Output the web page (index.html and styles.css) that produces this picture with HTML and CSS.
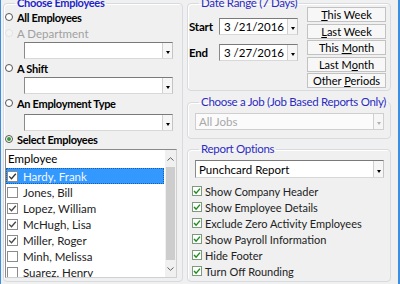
FILE: index.html
```html
<!DOCTYPE html>
<html>
<head>
  <title>Report Settings</title>
  <meta name="viewport" content="width=device-width, initial-scale=1.0">
  <link rel="stylesheet" href="styles.css">
</head>
<body>
  <div class="window">
    <fieldset class="group employees">
      <legend class="strong">Choose Employees</legend>
      <div class="option"><span class="radio"></span>All Employees</div>
      <div class="option disabled"><span class="radio"></span>A Department</div>
      <div class="combo pick"><span class="value"></span><span class="arrow"></span></div>
      <div class="option"><span class="radio"></span>A Shift</div>
      <div class="combo pick"><span class="value"></span><span class="arrow"></span></div>
      <div class="option"><span class="radio"></span>An Employment Type</div>
      <div class="combo pick last"><span class="value"></span><span class="arrow"></span></div>
      <div class="option"><span class="radio on"></span>Select Employees</div>

      <div class="list">
        <div class="list-body">
          <div class="list-head">Employee</div>
          <div class="item selected">
            <span class="box"><svg width="9" height="9" viewBox="0 0 9 9"><path d="M1.2 4.4 L3.5 6.7 L7.8 1.8" fill="none" stroke="currentColor" stroke-width="1.3"/></svg></span>
            <span class="name">Hardy, Frank</span>
          </div>
          <div class="item">
            <span class="box"></span>
            <span class="name">Jones, Bill</span>
          </div>
          <div class="item">
            <span class="box"><svg width="9" height="9" viewBox="0 0 9 9"><path d="M1.2 4.4 L3.5 6.7 L7.8 1.8" fill="none" stroke="currentColor" stroke-width="1.3"/></svg></span>
            <span class="name">Lopez, William</span>
          </div>
          <div class="item">
            <span class="box"><svg width="9" height="9" viewBox="0 0 9 9"><path d="M1.2 4.4 L3.5 6.7 L7.8 1.8" fill="none" stroke="currentColor" stroke-width="1.3"/></svg></span>
            <span class="name">McHugh, Lisa</span>
          </div>
          <div class="item">
            <span class="box"><svg width="9" height="9" viewBox="0 0 9 9"><path d="M1.2 4.4 L3.5 6.7 L7.8 1.8" fill="none" stroke="currentColor" stroke-width="1.3"/></svg></span>
            <span class="name">Miller, Roger</span>
          </div>
          <div class="item">
            <span class="box"></span>
            <span class="name">Minh, Melissa</span>
          </div>
          <div class="item">
            <span class="box"></span>
            <span class="name">Suarez, Henry</span>
          </div>
        </div>
        <div class="scroll">
          <span class="scroll-btn"><svg width="7" height="4" viewBox="0 0 7 4"><path d="M0.5 3.5 L3.5 0.7 L6.5 3.5" fill="none" stroke="#606060" stroke-width="1"/></svg></span>
          <span class="thumb"></span>
          <span class="scroll-btn"><svg width="7" height="4" viewBox="0 0 7 4"><path d="M0.5 0.5 L3.5 3.3 L6.5 0.5" fill="none" stroke="#606060" stroke-width="1"/></svg></span>
        </div>
      </div>
    </fieldset>

    <div class="side">
      <fieldset class="group dates">
        <legend>Date Range (7 Days)</legend>
        <div class="date-fields">
          <div class="date-row">
            <span class="date-label">Start</span>
            <div class="combo date"><span class="value">3 /21/2016</span><span class="arrow"></span></div>
          </div>
          <div class="date-row">
            <span class="date-label">End</span>
            <div class="combo date"><span class="value">3 /27/2016</span><span class="arrow"></span></div>
          </div>
        </div>
        <div class="periods">
          <button class="period"><u>T</u>his Week</button>
          <button class="period"><u>L</u>ast Week</button>
          <button class="period">This <u>M</u>onth</button>
          <button class="period">Last M<u>o</u>nth</button>
          <button class="period">Other <u>P</u>eriods</button>
        </div>
      </fieldset>

      <fieldset class="group job">
        <legend>Choose a Job (Job Based Reports Only)</legend>
        <div class="combo wide disabled"><span class="value">All Jobs</span><span class="arrow"></span></div>
      </fieldset>

      <fieldset class="group report">
        <legend>Report Options</legend>
        <div class="combo wide tall"><span class="value">Punchcard Report</span><span class="arrow"></span></div>
        <div class="check"><span class="tick"><svg width="8" height="8" viewBox="0 0 8 8"><path d="M1 4 L3.1 6.1 L7 1.6" fill="none" stroke="currentColor" stroke-width="1.4"/></svg></span>Show Company Header</div>
        <div class="check"><span class="tick"><svg width="8" height="8" viewBox="0 0 8 8"><path d="M1 4 L3.1 6.1 L7 1.6" fill="none" stroke="currentColor" stroke-width="1.4"/></svg></span>Show Employee Details</div>
        <div class="check"><span class="tick"><svg width="8" height="8" viewBox="0 0 8 8"><path d="M1 4 L3.1 6.1 L7 1.6" fill="none" stroke="currentColor" stroke-width="1.4"/></svg></span>Exclude Zero Activity Employees</div>
        <div class="check"><span class="tick"><svg width="8" height="8" viewBox="0 0 8 8"><path d="M1 4 L3.1 6.1 L7 1.6" fill="none" stroke="currentColor" stroke-width="1.4"/></svg></span>Show Payroll Information</div>
        <div class="check"><span class="tick"><svg width="8" height="8" viewBox="0 0 8 8"><path d="M1 4 L3.1 6.1 L7 1.6" fill="none" stroke="currentColor" stroke-width="1.4"/></svg></span>Hide Footer</div>
        <div class="check"><span class="tick"><svg width="8" height="8" viewBox="0 0 8 8"><path d="M1 4 L3.1 6.1 L7 1.6" fill="none" stroke="currentColor" stroke-width="1.4"/></svg></span>Turn Off Rounding</div>
      </fieldset>
    </div>
  </div>
</body>
</html>
```

FILE: styles.css
```css
* {
  box-sizing: border-box;
}

body {
  margin: 0;
  background-color: #f0f0f0;
  font-family: Lato, "Noto Sans", sans-serif;
  font-size: 11.5px;
  color: #000;
  overflow: hidden;
}

.window {
  display: flex;
  align-items: flex-start;
  gap: 4px;
  height: 290px;
  margin-top: -3px;
  padding-left: 2px;
  border-left: 1px solid #3c8ee0;
  border-right: 2px solid #3c8ee0;
}

/* group boxes */
.group {
  margin: 0;
  padding: 0 2px;
  min-width: 0;
  border: 1px solid #d5dbe0;
  border-radius: 4px;
  box-shadow: inset 1px 1px 0 #fff;
}

.group legend {
  margin-left: 9px;
  padding: 0 2px;
  line-height: 12px;
  color: #2b2bc2;
  font-size: 11.5px;
  letter-spacing: -0.3px;
  white-space: nowrap;
}

.group legend.strong {
  font-size: 11px;
  font-weight: bold;
  color: #1f1fc8;
}

/* left column */
.employees {
  width: 180px;
  padding-bottom: 3px;
}

.option {
  display: flex;
  align-items: center;
  height: 16px;
  font-size: 11px;
  font-weight: bold;
  letter-spacing: -0.3px;
}

.option.disabled {
  color: #a0a0a0;
  font-size: 11.5px;
  font-weight: normal;
  letter-spacing: 0;
}

.radio {
  width: 8px;
  height: 8px;
  margin: 0 4px 0 -1px;
  border: 1px solid #555;
  border-radius: 50%;
  background: #fff;
  position: relative;
}

.option.disabled .radio {
  border-color: #e2e2e2;
  background: #f4f4f4;
}

.radio.on::after {
  content: "";
  position: absolute;
  left: 1px;
  top: 1px;
  width: 4px;
  height: 4px;
  border-radius: 50%;
  background: #3a9a3a;
}

/* combo boxes */
.combo {
  display: flex;
  align-items: center;
  height: 17px;
  background: #fff;
  border: 1px solid;
  border-color: #7a7a7a #c4c4c4 #d8d8d8 #8a8a8a;
}

.combo .value {
  flex: 1;
  padding-left: 3px;
  white-space: nowrap;
}

.combo .arrow {
  display: flex;
  align-items: flex-end;
  justify-content: center;
  width: 10px;
  height: 100%;
  padding-bottom: 4px;
  background: #f6f6f6;
  border-left: 1px solid #d0d0d0;
}

.combo .arrow::after {
  content: "";
  border-left: 2.5px solid transparent;
  border-right: 2.5px solid transparent;
  border-top: 3px solid #000;
}

.combo.pick {
  width: 149px;
  margin: 1px 0 1px 18px;
}

.combo.pick.last {
  margin: 3px 0 0 18px;
}

.combo.disabled {
  border-color: #cfcfcf;
  background: #fbfbfb;
  color: #a8a8a8;
}

.combo.disabled .arrow::after {
  border-top-color: #b0b0b0;
}

/* employee list */
.list {
  display: flex;
  width: 172px;
  height: 129px;
  margin: 2px 0 0 -1px;
  background: #fff;
  border: 1px solid;
  border-color: #8a8a8a #d0d0d0 #d0d0d0 #8a8a8a;
  overflow: hidden;
}

.list-body {
  flex: 1;
}

.list-head {
  height: 18px;
  line-height: 18px;
  padding-left: 2px;
  font-size: 11.5px;
}

.item {
  display: flex;
  align-items: center;
  height: 16px;
  margin-right: 1px;
  font-size: 11.5px;
  color: #222;
}

.item .box {
  display: flex;
  align-items: center;
  justify-content: center;
  width: 11px;
  height: 11px;
  margin: 0 5px 0 1px;
  border: 1px solid #8c8c8c;
  background: #fff;
  color: #444;
}

.item.selected {
  background: #3399ff;
  outline: 1px dotted #1b5fa8;
  outline-offset: -1px;
  color: #f2f8ff;
}

.item.selected .box {
  color: #333;
}

.scroll {
  display: flex;
  flex-direction: column;
  width: 11px;
  background: #f0f0f0;
}

.scroll-btn {
  display: flex;
  align-items: center;
  justify-content: center;
  height: 17px;
}

.thumb {
  flex: 1;
  margin: 0 1px;
  background: #cdcdcd;
}

/* right column */
.side {
  display: flex;
  flex-direction: column;
  width: 204px;
}

.dates {
  display: flex;
  align-items: flex-start;
  padding-bottom: 2px;
}

.date-fields {
  display: flex;
  flex-direction: column;
  gap: 9px;
  margin-top: 9px;
}

.date-row {
  display: flex;
  align-items: center;
}

.date-label {
  width: 30px;
  margin-left: -1px;
  font-weight: bold;
  letter-spacing: -0.2px;
}

.combo.date {
  width: 79px;
}

.combo.date .value {
  padding-left: 4px;
}

.periods {
  display: flex;
  flex-direction: column;
  gap: 1.5px;
  margin: -2px 0 0 9px;
}

.period {
  width: 79px;
  height: 15px;
  padding: 0;
  font: inherit;
  font-size: 11px;
  line-height: 13px;
  color: #000;
  background: #f7f7f7;
  border: 1px solid #c2c2c2;
}

.job {
  margin-top: 5px;
  padding-bottom: 8px;
}

.combo.wide {
  width: 189px;
  margin: 5px 0 0 5px;
}

.report {
  margin-top: 4px;
  padding-bottom: 2px;
}

.combo.tall {
  height: 18px;
  margin-top: 5px;
  margin-bottom: 5px;
}

.check {
  display: flex;
  align-items: center;
  height: 16px;
  margin-left: 2px;
  font-size: 11px;
  color: #222;
}

.tick {
  display: flex;
  align-items: center;
  justify-content: center;
  width: 10px;
  height: 10px;
  margin-right: 3px;
  border: 1px solid #7c9a7c;
  background: #fff;
  color: #1e8c1e;
}
```
